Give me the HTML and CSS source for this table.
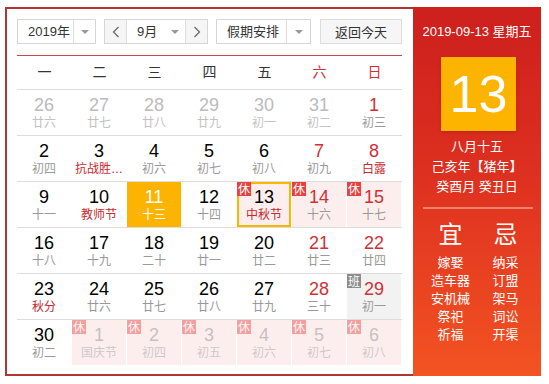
FILE: index.html
```html
<!DOCTYPE html>
<html lang="zh-CN">
<head>
<meta charset="utf-8">
<title>万年历</title>
<link rel="stylesheet" href="styles.css">
</head>
<body>
<div class="cal">
  <div class="main">
    <div class="toolbar">
      <div class="sel year"><span class="val">2019年</span><span class="arr"></span></div>
      <div class="sel month">
        <span class="nav"><svg width="8" height="12" viewBox="0 0 8 12"><polyline points="6.5,1 1.5,6 6.5,11" fill="none" stroke="#666" stroke-width="1.2"/></svg></span>
        <span class="mid"><span class="mval">9月</span><span class="arr"></span></span>
        <span class="nav next"><svg width="8" height="12" viewBox="0 0 8 12"><polyline points="1.5,1 6.5,6 1.5,11" fill="none" stroke="#666" stroke-width="1.2"/></svg></span>
      </div>
      <div class="sel holiday"><span class="val">假期安排</span><span class="arr"></span></div>
      <button class="today-btn">返回今天</button>
    </div>
    <div class="week">
      <span>一</span><span>二</span><span>三</span><span>四</span><span>五</span><span class="red">六</span><span class="red">日</span>
    </div>
    <div class="grid">
      <div class="row">
        <div class="cell other"><div class="num">26</div><div class="lunar">廿六</div></div>
        <div class="cell other"><div class="num">27</div><div class="lunar">廿七</div></div>
        <div class="cell other"><div class="num">28</div><div class="lunar">廿八</div></div>
        <div class="cell other"><div class="num">29</div><div class="lunar">廿九</div></div>
        <div class="cell other"><div class="num">30</div><div class="lunar">初一</div></div>
        <div class="cell other"><div class="num">31</div><div class="lunar">初二</div></div>
        <div class="cell"><div class="num red">1</div><div class="lunar">初三</div></div>
      </div>
      <div class="row">
        <div class="cell"><div class="num">2</div><div class="lunar">初四</div></div>
        <div class="cell"><div class="num">3</div><div class="lunar fest">抗战胜…</div></div>
        <div class="cell"><div class="num">4</div><div class="lunar">初六</div></div>
        <div class="cell"><div class="num">5</div><div class="lunar">初七</div></div>
        <div class="cell"><div class="num">6</div><div class="lunar">初八</div></div>
        <div class="cell"><div class="num red">7</div><div class="lunar">初九</div></div>
        <div class="cell"><div class="num red">8</div><div class="lunar fest">白露</div></div>
      </div>
      <div class="row">
        <div class="cell"><div class="num">9</div><div class="lunar">十一</div></div>
        <div class="cell"><div class="num">10</div><div class="lunar fest">教师节</div></div>
        <div class="cell today"><div class="num">11</div><div class="lunar">十三</div></div>
        <div class="cell"><div class="num">12</div><div class="lunar">十四</div></div>
        <div class="cell rest selected"><span class="badge">休</span><div class="num">13</div><div class="lunar fest">中秋节</div></div>
        <div class="cell rest"><span class="badge">休</span><div class="num red">14</div><div class="lunar">十六</div></div>
        <div class="cell rest"><span class="badge">休</span><div class="num red">15</div><div class="lunar">十七</div></div>
      </div>
      <div class="row">
        <div class="cell"><div class="num">16</div><div class="lunar">十八</div></div>
        <div class="cell"><div class="num">17</div><div class="lunar">十九</div></div>
        <div class="cell"><div class="num">18</div><div class="lunar">二十</div></div>
        <div class="cell"><div class="num">19</div><div class="lunar">廿一</div></div>
        <div class="cell"><div class="num">20</div><div class="lunar">廿二</div></div>
        <div class="cell"><div class="num red">21</div><div class="lunar">廿三</div></div>
        <div class="cell"><div class="num red">22</div><div class="lunar">廿四</div></div>
      </div>
      <div class="row">
        <div class="cell"><div class="num">23</div><div class="lunar fest">秋分</div></div>
        <div class="cell"><div class="num">24</div><div class="lunar">廿六</div></div>
        <div class="cell"><div class="num">25</div><div class="lunar">廿七</div></div>
        <div class="cell"><div class="num">26</div><div class="lunar">廿八</div></div>
        <div class="cell"><div class="num">27</div><div class="lunar">廿九</div></div>
        <div class="cell"><div class="num red">28</div><div class="lunar">三十</div></div>
        <div class="cell work"><span class="badge">班</span><div class="num red">29</div><div class="lunar">初一</div></div>
      </div>
      <div class="row">
        <div class="cell"><div class="num">30</div><div class="lunar">初二</div></div>
        <div class="cell rest faded"><span class="badge">休</span><div class="num">1</div><div class="lunar">国庆节</div></div>
        <div class="cell rest faded"><span class="badge">休</span><div class="num">2</div><div class="lunar">初四</div></div>
        <div class="cell rest faded"><span class="badge">休</span><div class="num">3</div><div class="lunar">初五</div></div>
        <div class="cell rest faded"><span class="badge">休</span><div class="num">4</div><div class="lunar">初六</div></div>
        <div class="cell rest faded"><span class="badge">休</span><div class="num">5</div><div class="lunar">初七</div></div>
        <div class="cell rest faded"><span class="badge">休</span><div class="num">6</div><div class="lunar">初八</div></div>
      </div>
    </div>
  </div>
  <div class="side">
    <div class="date">2019-09-13 星期五</div>
    <div class="big">13</div>
    <div class="info">
      <div>八月十五</div>
      <div>己亥年【猪年】</div>
      <div>癸酉月 癸丑日</div>
    </div>
    <div class="divider"></div>
    <div class="yiji">
      <div class="col">
        <div class="head">宜</div>
        <div class="items"><div>嫁娶</div><div>造车器</div><div>安机械</div><div>祭祀</div><div>祈福</div></div>
      </div>
      <div class="col">
        <div class="head">忌</div>
        <div class="items"><div>纳采</div><div>订盟</div><div>架马</div><div>词讼</div><div>开渠</div></div>
      </div>
    </div>
  </div>
</div>
</body>
</html>
```
FILE: styles.css
```css
html, body {
  margin: 0;
  padding: 0;
  background: #fff;
}
body {
  font-family: "Liberation Sans", "Noto Sans CJK SC", sans-serif;
  color: #000;
}
.cal {
  display: flex;
  margin: 7px 0 0 5px;
  width: 536px;
  height: 369px;
}
.main {
  width: 408px;
  box-sizing: border-box;
  border: 2px solid #b03535;
  border-right: 0;
  padding: 10px 11px 9px 10px;
}
.toolbar {
  display: flex;
  gap: 8px;
  height: 25px;
}
.sel {
  display: flex;
  box-sizing: border-box;
  height: 25px;
  border: 1px solid #d6d6d6;
  background: #fff;
  font-size: 13px;
  color: #333;
}
.year { width: 79px; }
.month { width: 104px; }
.holiday { width: 95px; margin-left: 0; }
.val {
  box-sizing: border-box;
  padding-left: 10px;
  line-height: 23px;
  border-right: 1px solid #ddd;
}
.year .val { width: 56px; }
.holiday .val { width: 70px; }
.arr {
  flex: 1;
  display: flex;
  align-items: center;
  justify-content: center;
}
.arr::before {
  content: "";
  border-left: 4px solid transparent;
  border-right: 4px solid transparent;
  border-top: 4px solid #999;
}
.nav {
  width: 21px;
  background: #f5f5f5;
  border-right: 1px solid #ddd;
  display: flex;
  align-items: center;
  justify-content: center;
}
.nav.next {
  border-right: 0;
  border-left: 1px solid #ddd;
}
.mid {
  width: 58px;
  display: flex;
}
.mval {
  padding-left: 10px;
  line-height: 23px;
}
.mid .arr { flex: 0 0 20px; margin-left: auto; }
.today-btn {
  width: 82px;
  height: 25px;
  margin-left: 1px;
  box-sizing: border-box;
  border: 1px solid #ddd;
  background: #f6f6f6;
  font-family: "Liberation Sans", "Noto Sans CJK SC", sans-serif;
  font-size: 13px;
  color: #333;
  padding: 0;
}
.week {
  margin-top: 11px;
  display: grid;
  grid-template-columns: repeat(7, 55px);
  border-top: 1px solid #c9474a;
  border-bottom: 1px solid #ddd;
  height: 35px;
  box-sizing: border-box;
  line-height: 33px;
  text-align: center;
  font-size: 14px;
  color: #333;
}
.red { color: #d12f35 !important; }
.week .red { color: #d12f35; }
.row {
  display: grid;
  grid-template-columns: repeat(7, 55px);
  height: 46px;
  box-sizing: border-box;
  border-bottom: 1px solid #ddd;
}
.row:last-child {
  border-bottom: 0;
  height: 45px;
}
.cell {
  position: relative;
  margin-right: 1px;
  text-align: center;
  box-sizing: border-box;
}
.num {
  padding-top: 5px;
  font-size: 18px;
  line-height: 20px;
  color: #000;
}
.lunar {
  font-size: 12px;
  line-height: 16px;
  color: #999;
  white-space: nowrap;
}
.fest { color: #c8282e; }
.other .num { color: #bbb; }
.other .lunar { color: #c2c2c2; }
.today { background: #fdb400; }
.today .num, .today .lunar { color: #fff; }
.rest { background: #fdeeee; }
.work { background: #f2f2f2; }
.badge {
  position: absolute;
  top: 0;
  left: 0;
  width: 14px;
  height: 14px;
  line-height: 14px;
  font-size: 12px;
  color: #fff;
  background: #e8403f;
  font-family: "Noto Sans CJK SC", sans-serif;
}
.work .badge { background: #8c8c8c; }
.selected {
  border: 2px solid #f9b600;
}
.selected .num { padding-top: 3px; }
.selected .badge { top: -2px; left: -2px; }
.faded .badge, .faded .num, .faded .lunar { opacity: 0.45; }
.faded .num { color: #888; }
.faded .lunar { color: #999; }
.side {
  width: 128px;
  background: linear-gradient(#cd1f1d, #dd3020 45%, #f35322);
  color: #fff;
  font-family: "Liberation Sans", "Noto Sans CJK SC", sans-serif;
}
.date {
  padding-top: 15px;
  text-align: center;
  font-size: 13px;
  line-height: 20px;
}
.big {
  width: 75px;
  height: 74px;
  margin: 15px 0 0 28px;
  background: #fdb400;
  text-align: center;
  font-size: 52px;
  line-height: 74px;
  box-shadow: 0 1px 3px rgba(120, 20, 0, 0.35);
}
.info {
  margin-top: 6px;
  text-align: center;
  font-size: 13px;
  line-height: 20px;
}
.divider {
  margin: 10px 0 0 10px;
  width: 110px;
  height: 2px;
  background: #f0826c;
}
.yiji {
  display: flex;
  margin: 11px 0 0 10px;
  width: 110px;
}
.col {
  flex: 1;
  text-align: center;
}
.head {
  font-size: 24px;
  line-height: 30px;
}
.items {
  margin-top: 4px;
  font-size: 13px;
  line-height: 18px;
}
```
